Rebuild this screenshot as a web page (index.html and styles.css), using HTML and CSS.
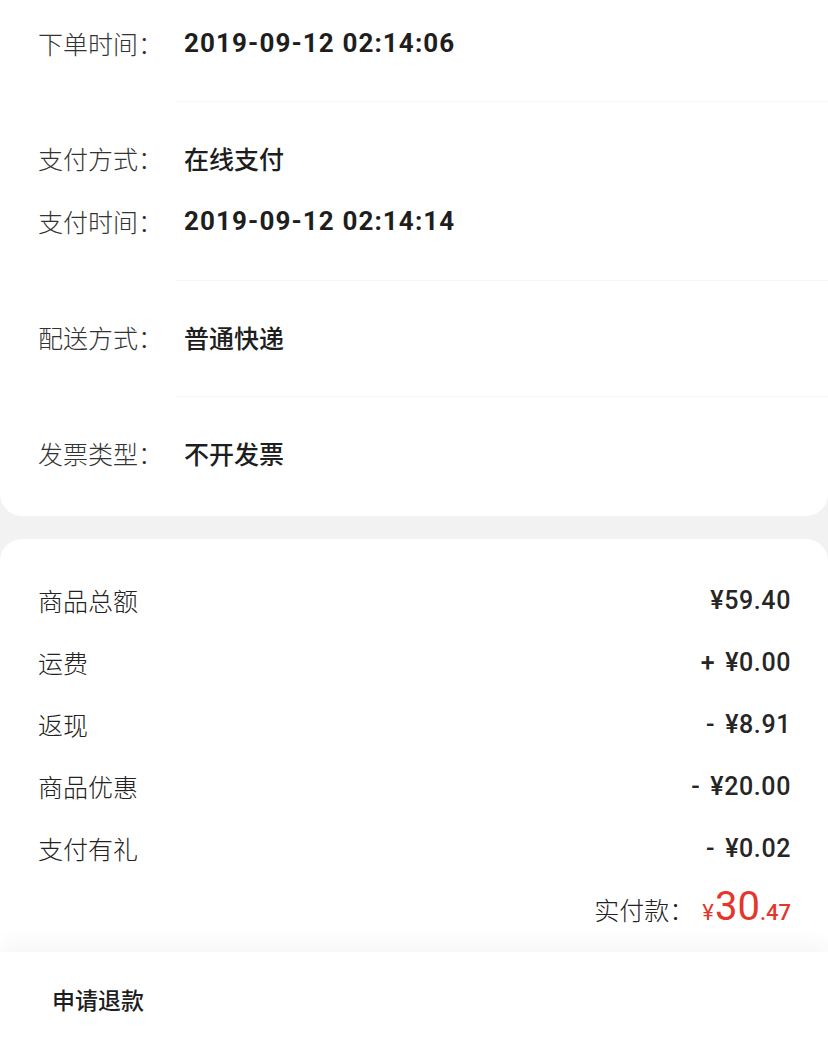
FILE: index.html
```html
<!DOCTYPE html>
<html lang="zh-CN">
<head>
<meta charset="utf-8">
<title>订单详情</title>
<link rel="stylesheet" href="styles.css">
</head>
<body>
<div class="page">
  <section class="card info">
    <div class="group first">
      <div class="row"><span class="label">下单时间：</span><span class="value num">2019-09-12 02:14:06</span></div>
    </div>
    <div class="divider"></div>
    <div class="group">
      <div class="row"><span class="label">支付方式：</span><span class="value">在线支付</span></div>
      <div class="row"><span class="label">支付时间：</span><span class="value num">2019-09-12 02:14:14</span></div>
    </div>
    <div class="divider"></div>
    <div class="group">
      <div class="row"><span class="label">配送方式：</span><span class="value">普通快递</span></div>
    </div>
    <div class="divider"></div>
    <div class="group last">
      <div class="row"><span class="label">发票类型：</span><span class="value">不开发票</span></div>
    </div>
  </section>

  <section class="card amounts">
    <div class="arow"><span class="aname">商品总额</span><span class="amount">¥59.40</span></div>
    <div class="arow"><span class="aname">运费</span><span class="amount"><span class="sign">+</span>¥0.00</span></div>
    <div class="arow"><span class="aname">返现</span><span class="amount"><span class="sign">-</span>¥8.91</span></div>
    <div class="arow"><span class="aname">商品优惠</span><span class="amount"><span class="sign">-</span>¥20.00</span></div>
    <div class="arow"><span class="aname">支付有礼</span><span class="amount"><span class="sign">-</span>¥0.02</span></div>
    <div class="total"><span class="tlabel">实付款：</span><span class="price"><span class="yen">¥</span><span class="int">30</span><span class="dec">.47</span></span></div>
  </section>

  <footer class="bar">
    <span class="refund">申请退款</span>
  </footer>
</div>
</body>
</html>
```

FILE: styles.css
```css
* { box-sizing: border-box; }
html, body { margin: 0; padding: 0; }
body {
  background: #f2f2f2;
  font-family: "Noto Sans CJK SC", "Noto Sans", sans-serif;
  color: #222;
  width: 828px;
  height: 1050px;
  overflow: hidden;
}
.page { display: flex; flex-direction: column; height: 1050px; }
.card { background: #fff; }
.info {
  border-radius: 0 0 22px 22px;
}
.group { padding: 25px 0 27px 0; }
.group.first { padding: 12px 0 26px 0; }
.group.last { padding: 25px 0 31px 0; }
.row {
  display: flex;
  align-items: center;
  height: 63px;
  padding-left: 38px;
  padding-bottom: 2px;
}
.label {
  width: 146px;
  font-size: 25px;
  color: #333;
  font-weight: 300;
}
.value {
  font-size: 25px;
  font-weight: 500;
  color: #1e1e1e;
}
.value.num {
  font-family: "Roboto", "Noto Sans CJK SC", sans-serif;
  font-size: 26px;
  font-weight: 700;
  letter-spacing: 1.1px;
}
.divider {
  height: 1px;
  margin-left: 176px;
  background: #f7f7f7;
}
.amounts {
  margin-top: 23px;
  border-radius: 22px 22px 0 0;
  padding: 32px 37px 0 38px;
  flex: 1;
}
.arow {
  display: flex;
  justify-content: space-between;
  align-items: center;
  height: 62px;
  padding-bottom: 4px;
}
.aname { font-size: 25px; color: #222; font-weight: 300; }
.amount {
  font-family: "Roboto", "Noto Sans CJK SC", sans-serif;
  font-size: 25px;
  font-weight: 500;
  color: #262626;
  letter-spacing: 0.6px;
}
.sign { margin-right: 10px; }
.total {
  display: flex;
  justify-content: flex-end;
  align-items: baseline;
  height: 56px;
  padding-top: 2px;
}
.tlabel { font-size: 25px; color: #222; font-weight: 300; margin-right: 8px; }
.price {
  color: #e5362c;
  font-family: "Roboto", "Noto Sans CJK SC", sans-serif;
}
.yen { font-size: 22px; margin-right: 1px; }
.int { font-size: 40px; }
.dec { font-size: 22px; font-weight: 500; }
.bar {
  background: #fff;
  height: 98px;
  display: flex;
  align-items: center;
  padding-left: 52px;
  padding-bottom: 4px;
  box-shadow: 0 -10px 18px rgba(0, 0, 0, 0.035);
  position: relative;
}
.refund { font-size: 23px; font-weight: 500; color: #1e1e1e; }
```
